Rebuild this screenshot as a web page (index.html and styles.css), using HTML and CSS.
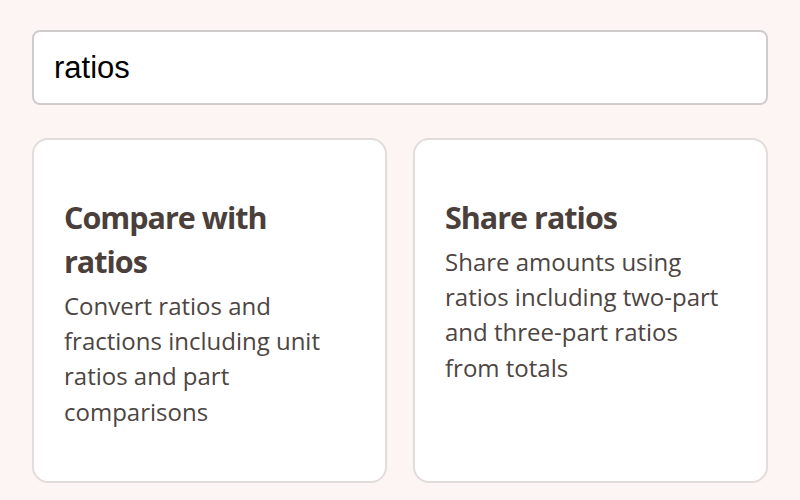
FILE: index.html
```html
<!DOCTYPE html>
<html lang="en">
<head>
    <meta charset="UTF-8">
    <title>Lessons</title>
    <link rel="stylesheet" href="styles.css">
</head>
<body>

<div class="page">
    <input class="search" type="text" value="ratios">

    <div class="cards">
        <div class="card">
            <h2>Compare with ratios</h2>
            <p>Convert ratios and fractions including unit ratios and part comparisons</p>
        </div>
        <div class="card">
            <h2>Share ratios</h2>
            <p>Share amounts using ratios including two-part and three-part ratios from totals</p>
        </div>
    </div>
</div>

</body>
</html>
```

FILE: styles.css
```css
body {
    margin: 0;
    background: #fcf5f4;
    font-family: "Open Sans", sans-serif;
}
.page {
    padding: 30px 32px;
}
.search {
    display: block;
    width: 100%;
    height: 75px;
    box-sizing: border-box;
    padding: 0 20px;
    border: 2px solid #d0cccc;
    border-radius: 8px;
    background: white;
    font-family: "Liberation Sans", Arial, sans-serif;
    font-size: 31px;
    color: #000;
    outline: none;
}
.cards {
    display: grid;
    grid-template-columns: 1fr 1fr;
    gap: 26px;
    margin-top: 33px;
}
.card {
    background: white;
    border: 2px solid #e2dcdb;
    border-radius: 16px;
    padding: 55px 30px 52px;
}
.card h2 {
    margin: 0;
    font-size: 30.5px;
    font-weight: 700;
    line-height: 44px;
    letter-spacing: -1px;
    color: #4a3f3b;
}
.card p {
    margin: 5px 0 0;
    font-size: 24px;
    line-height: 35.2px;
    color: #4d4542;
}
```
